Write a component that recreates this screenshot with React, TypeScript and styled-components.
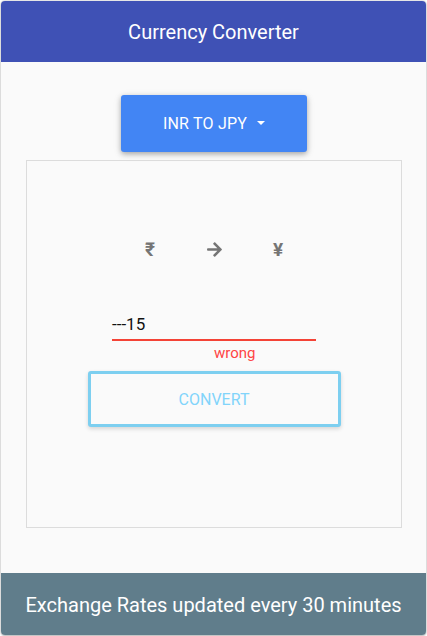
import React from "react";
import styled, { createGlobalStyle } from "styled-components";
import { FaArrowRight } from "react-icons/fa";

const Global = createGlobalStyle`
  html, body { margin: 0; padding: 0; background: #fff; }
  body { font-family: Roboto, "Noto Sans", sans-serif; }
  * { box-sizing: border-box; }
`;

const Card = styled.div`
  margin: 1px;
  width: 425px;
  height: 634px;
  border-radius: 4px;
  overflow: hidden;
  background: #fafafa;
  box-shadow: 0 0 2px rgba(0,0,0,0.35), 0 1px 2px rgba(0,0,0,0.2);
  display: flex;
  flex-direction: column;
`;

const Header = styled.header`
  height: 61px;
  flex: none;
  background: #3f51b5;
  color: #fff;
  font-size: 20px;
  display: flex;
  align-items: center;
  justify-content: center;
`;

const Main = styled.main`
  flex: 1;
  display: flex;
  flex-direction: column;
  align-items: center;
  padding: 33px 24px 0 25px;
`;

const SelectButton = styled.button`
  width: 186px;
  height: 57px;
  border: none;
  border-radius: 3px;
  background: #4285f4;
  color: #fff;
  font-family: Roboto, sans-serif;
  font-size: 16px;
  letter-spacing: 0.2px;
  display: flex;
  align-items: center;
  justify-content: center;
  gap: 10px;
  box-shadow: 0 2px 5px rgba(0,0,0,0.25), 0 2px 8px rgba(0,0,0,0.12);
`;

const Caret = styled.span`
  width: 0;
  height: 0;
  border-left: 4.5px solid transparent;
  border-right: 4.5px solid transparent;
  border-top: 4.5px solid #fff;
  margin-top: -2px;
`;

const Panel = styled.section`
  margin-top: 8px;
  align-self: stretch;
  height: 368px;
  border: 1px solid #dcdcdc;
  display: flex;
  flex-direction: column;
  align-items: center;
  padding-top: 78px;
`;

const SymbolRow = styled.div`
  display: flex;
  justify-content: center;
  height: 20px;
  align-items: center;
`;

const Symbol = styled.span`
  width: 64px;
  text-align: center;
  color: #757575;
  font-weight: bold;
  font-size: 19px;
  display: flex;
  justify-content: center;
  align-items: center;
`;

const Field = styled.div`
  margin-top: 51px;
  width: 204px;
  height: 31px;
  border-bottom: 2px solid #f44336;
  display: flex;
  align-items: center;
  font-size: 17px;
  color: #111;
  padding-bottom: 2px;
`;

const ErrorText = styled.div`
  width: 204px;
  padding-left: 102px;
  font-size: 15px;
  color: #ff4444;
  margin-top: 3px;
  line-height: 18px;
`;

const ConvertButton = styled.button`
  margin-top: 9px;
  width: 253px;
  height: 56px;
  border: 3px solid #7dcff0;
  border-radius: 3px;
  background: #fafafa;
  color: #81d4fa;
  font-family: Roboto, sans-serif;
  font-size: 16px;
  box-shadow: 0 2px 4px rgba(0,0,0,0.15);
`;

const Footer = styled.footer`
  height: 62px;
  flex: none;
  background: #607d8b;
  color: #fff;
  font-size: 20px;
  display: flex;
  align-items: center;
  justify-content: center;
  padding-top: 2px;
`;

export default function App() {
  return (
    <>
      <Global />
      <Card>
        <Header>Currency Converter</Header>
        <Main>
          <SelectButton>
            INR TO JPY <Caret />
          </SelectButton>
          <Panel>
            <SymbolRow>
              <Symbol>₹</Symbol>
              <Symbol><FaArrowRight size={17} /></Symbol>
              <Symbol>¥</Symbol>
            </SymbolRow>
            <Field>---15</Field>
            <ErrorText>wrong</ErrorText>
            <ConvertButton>CONVERT</ConvertButton>
          </Panel>
        </Main>
        <Footer>Exchange Rates updated every 30 minutes</Footer>
      </Card>
    </>
  );
}
